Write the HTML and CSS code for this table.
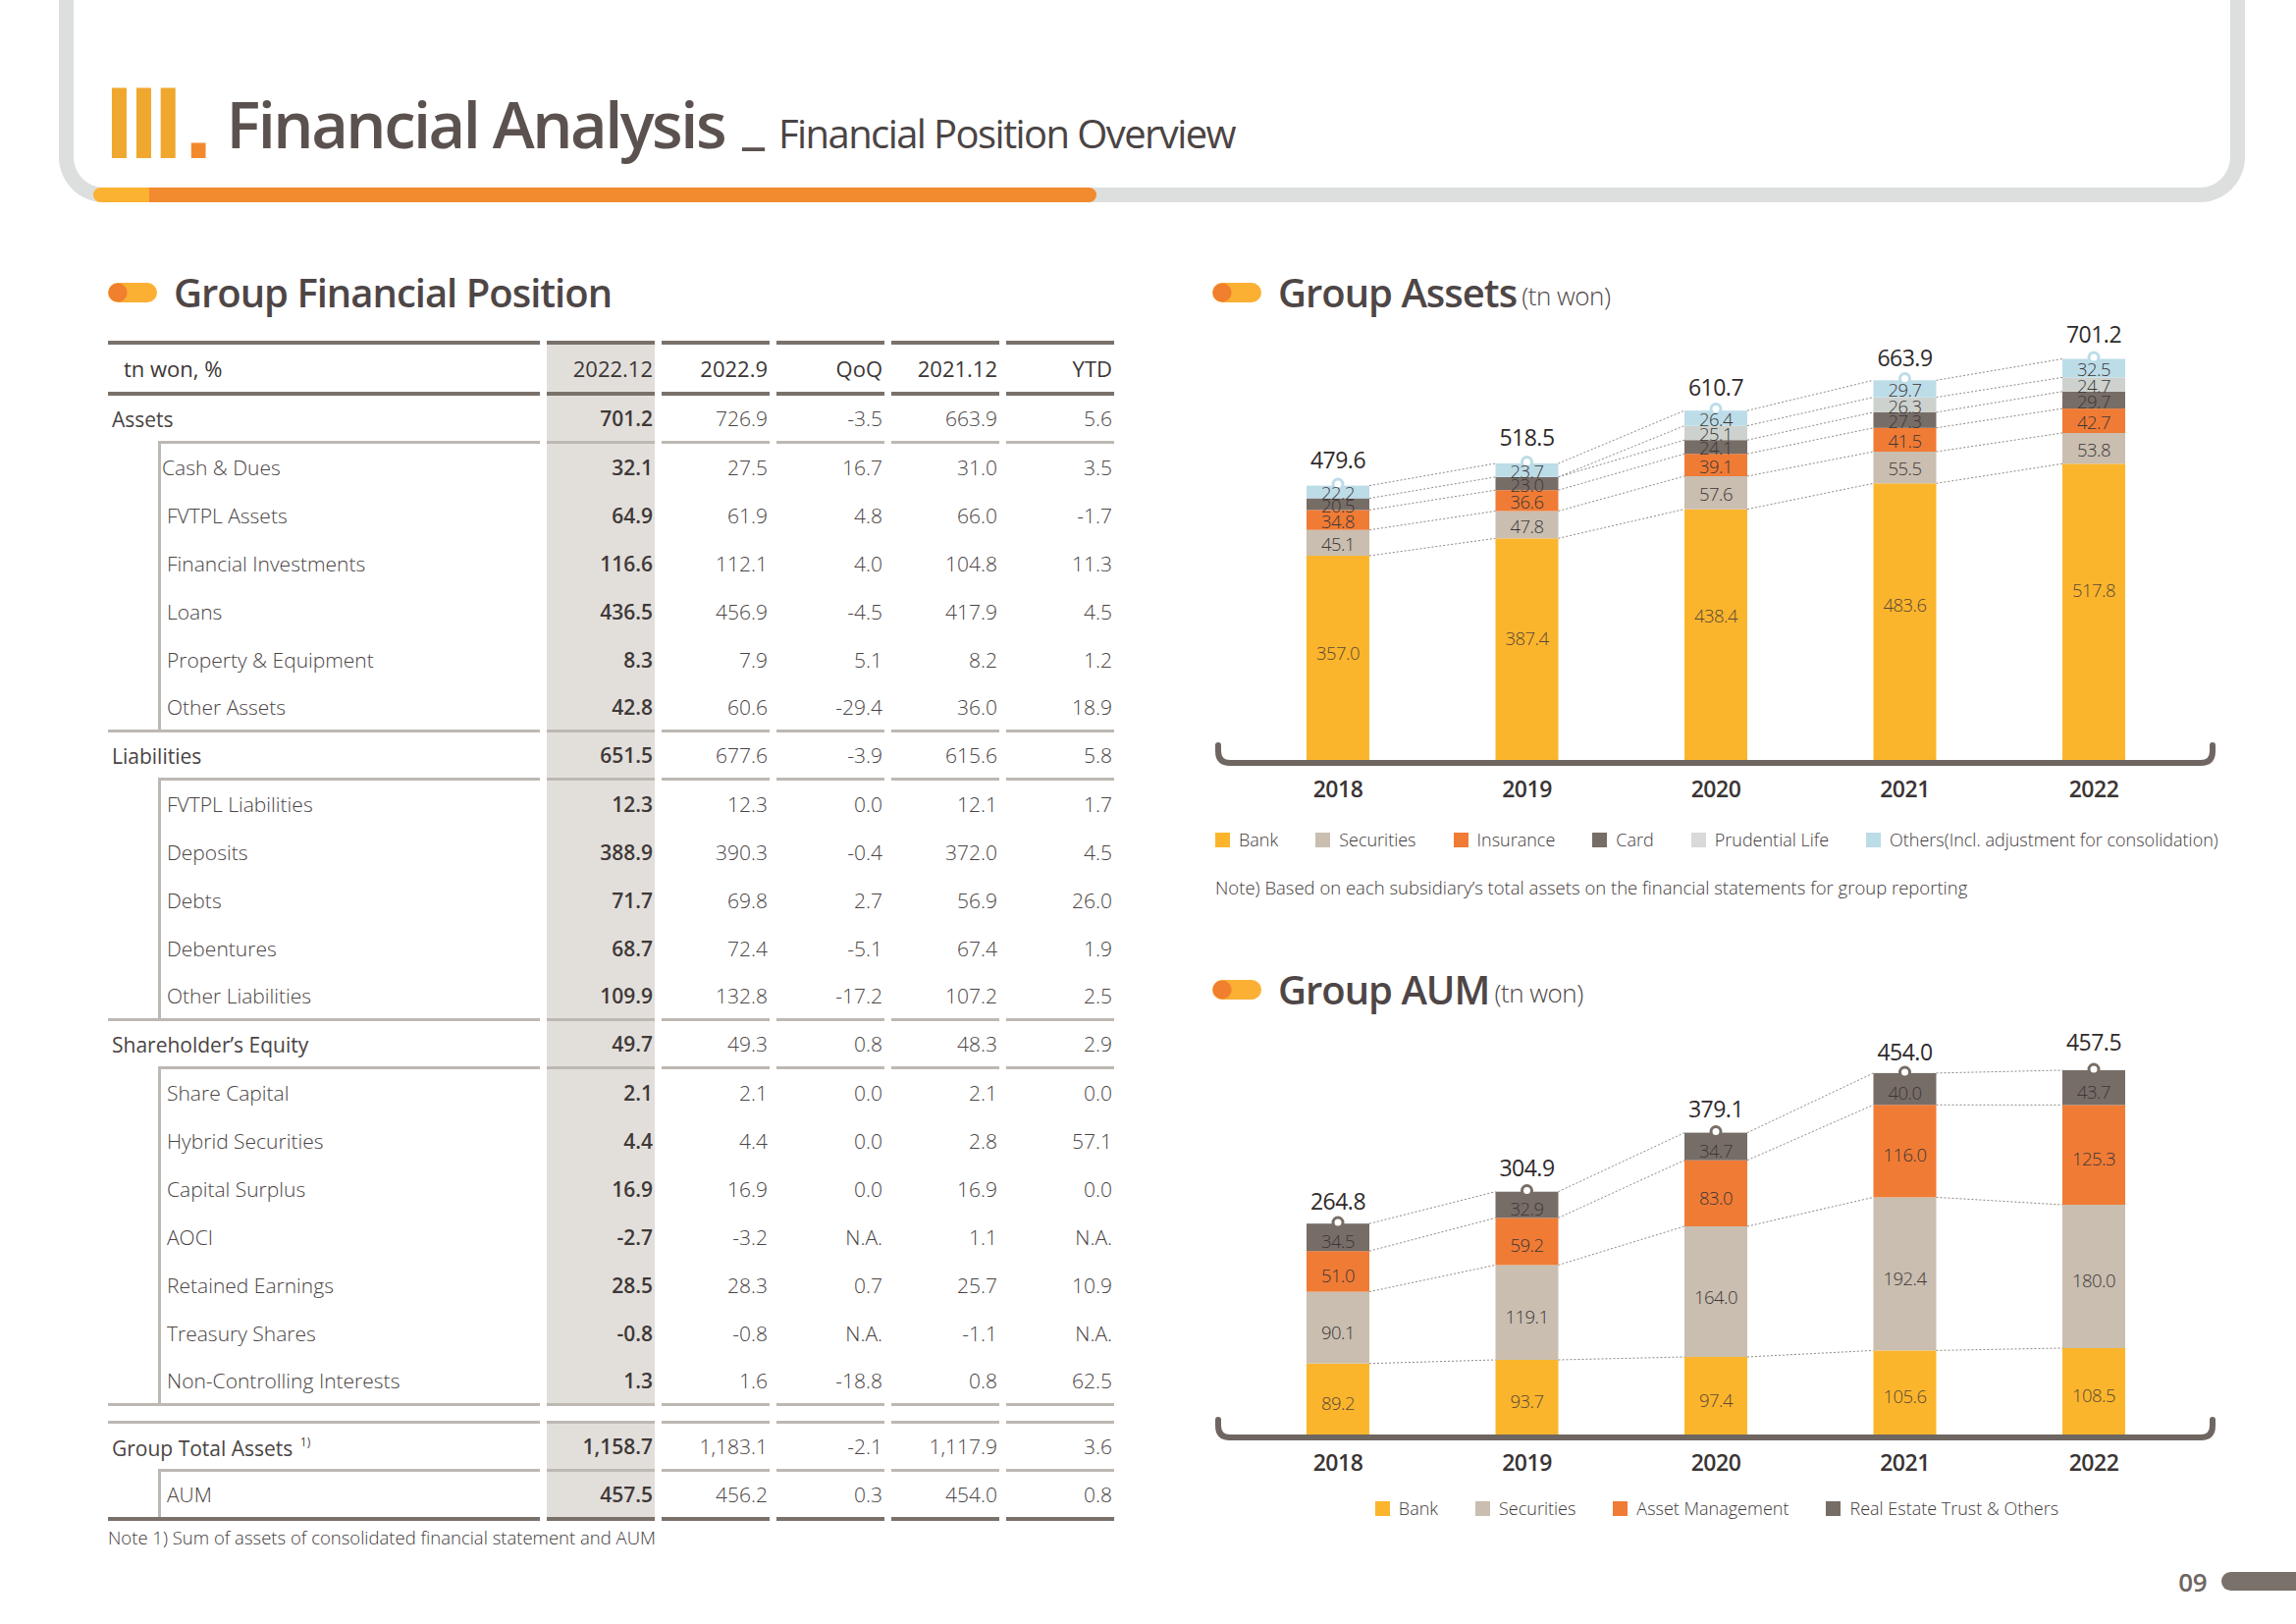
FILE: index.html
```html
<!DOCTYPE html>
<html lang="en">
<head>
<meta charset="utf-8">
<title>Financial Analysis - Financial Position Overview</title>
<link rel="stylesheet" href="styles.css">
</head>
<body>
<header class="top">
  <div class="frame">
    <h1 class="title"><span class="roman">III<span class="rdot">.</span></span><span class="main-t">Financial Analysis</span><span class="uscore">_</span><span class="sub-t">Financial Position Overview</span></h1>
    <div class="progress"></div>
  </div>
</header>

<main class="main">
  <section class="col left">
    <h2 class="sec-h"><span class="pill"></span>Group Financial Position</h2>
    <table class="fin">
      <colgroup><col class="c-lab"><col class="c-num"><col class="c-num"><col class="c-num"><col class="c-num"><col class="c-num"></colgroup>
      <tr class="head"><td class="lab">tn won, %</td><td class="cur">2022.12</td><td>2022.9</td><td>QoQ</td><td>2021.12</td><td>YTD</td></tr>
      <tr class="grp"><td class="lab">Assets</td><td class="cur">701.2</td><td>726.9</td><td>-3.5</td><td>663.9</td><td>5.6</td></tr>
      <tr class="sub"><td class="lab cash">Cash &amp; Dues</td><td class="cur">32.1</td><td>27.5</td><td>16.7</td><td>31.0</td><td>3.5</td></tr>
      <tr class="sub"><td class="lab">FVTPL Assets</td><td class="cur">64.9</td><td>61.9</td><td>4.8</td><td>66.0</td><td>-1.7</td></tr>
      <tr class="sub"><td class="lab">Financial Investments</td><td class="cur">116.6</td><td>112.1</td><td>4.0</td><td>104.8</td><td>11.3</td></tr>
      <tr class="sub"><td class="lab">Loans</td><td class="cur">436.5</td><td>456.9</td><td>-4.5</td><td>417.9</td><td>4.5</td></tr>
      <tr class="sub"><td class="lab">Property &amp; Equipment</td><td class="cur">8.3</td><td>7.9</td><td>5.1</td><td>8.2</td><td>1.2</td></tr>
      <tr class="sub last"><td class="lab">Other Assets</td><td class="cur">42.8</td><td>60.6</td><td>-29.4</td><td>36.0</td><td>18.9</td></tr>
      <tr class="grp"><td class="lab">Liabilities</td><td class="cur">651.5</td><td>677.6</td><td>-3.9</td><td>615.6</td><td>5.8</td></tr>
      <tr class="sub"><td class="lab">FVTPL Liabilities</td><td class="cur">12.3</td><td>12.3</td><td>0.0</td><td>12.1</td><td>1.7</td></tr>
      <tr class="sub"><td class="lab">Deposits</td><td class="cur">388.9</td><td>390.3</td><td>-0.4</td><td>372.0</td><td>4.5</td></tr>
      <tr class="sub"><td class="lab">Debts</td><td class="cur">71.7</td><td>69.8</td><td>2.7</td><td>56.9</td><td>26.0</td></tr>
      <tr class="sub"><td class="lab">Debentures</td><td class="cur">68.7</td><td>72.4</td><td>-5.1</td><td>67.4</td><td>1.9</td></tr>
      <tr class="sub last"><td class="lab">Other Liabilities</td><td class="cur">109.9</td><td>132.8</td><td>-17.2</td><td>107.2</td><td>2.5</td></tr>
      <tr class="grp"><td class="lab">Shareholder’s Equity</td><td class="cur">49.7</td><td>49.3</td><td>0.8</td><td>48.3</td><td>2.9</td></tr>
      <tr class="sub"><td class="lab">Share Capital</td><td class="cur">2.1</td><td>2.1</td><td>0.0</td><td>2.1</td><td>0.0</td></tr>
      <tr class="sub"><td class="lab">Hybrid Securities</td><td class="cur">4.4</td><td>4.4</td><td>0.0</td><td>2.8</td><td>57.1</td></tr>
      <tr class="sub"><td class="lab">Capital Surplus</td><td class="cur">16.9</td><td>16.9</td><td>0.0</td><td>16.9</td><td>0.0</td></tr>
      <tr class="sub"><td class="lab">AOCI</td><td class="cur">-2.7</td><td>-3.2</td><td>N.A.</td><td>1.1</td><td>N.A.</td></tr>
      <tr class="sub"><td class="lab">Retained Earnings</td><td class="cur">28.5</td><td>28.3</td><td>0.7</td><td>25.7</td><td>10.9</td></tr>
      <tr class="sub"><td class="lab">Treasury Shares</td><td class="cur">-0.8</td><td>-0.8</td><td>N.A.</td><td>-1.1</td><td>N.A.</td></tr>
      <tr class="sub last"><td class="lab">Non-Controlling Interests</td><td class="cur">1.3</td><td>1.6</td><td>-18.8</td><td>0.8</td><td>62.5</td></tr>
      <tr class="gap"><td></td><td></td><td></td><td></td><td></td><td></td></tr>
      <tr class="grp total"><td class="lab">Group Total Assets <sup>1)</sup></td><td class="cur">1,158.7</td><td>1,183.1</td><td>-2.1</td><td>1,117.9</td><td>3.6</td></tr>
      <tr class="sub end"><td class="lab">AUM</td><td class="cur">457.5</td><td>456.2</td><td>0.3</td><td>454.0</td><td>0.8</td></tr>
    </table>
    <p class="note">Note 1) Sum of assets of consolidated financial statement and AUM</p>
  </section>

  <section class="col right">
    <h2 class="sec-h"><span class="pill"></span>Group Assets<span class="unit">(tn won)</span></h2>
    <svg class="chart" width="1025" height="495" viewBox="0 0 1025 495">
      <g class="links">
        <line x1="160" y1="241" x2="288.5" y2="223.3"/><line x1="160" y1="214.7" x2="288.5" y2="195.5"/><line x1="160" y1="194.4" x2="288.5" y2="174.2"/><line x1="160" y1="182.5" x2="288.5" y2="160.8"/><line x1="160" y1="169.6" x2="288.5" y2="147"/>
        <line x1="352.5" y1="223.3" x2="481" y2="193.6"/><line x1="352.5" y1="195.5" x2="481" y2="160"/><line x1="352.5" y1="174.2" x2="481" y2="137.2"/><line x1="352.5" y1="160.8" x2="481" y2="123.2"/><line x1="352.5" y1="160.8" x2="481" y2="108.6"/><line x1="352.5" y1="147" x2="481" y2="93.2"/>
        <line x1="545" y1="193.6" x2="673.5" y2="167.3"/><line x1="545" y1="160" x2="673.5" y2="135"/><line x1="545" y1="137.2" x2="673.5" y2="110.8"/><line x1="545" y1="123.2" x2="673.5" y2="94.9"/><line x1="545" y1="108.6" x2="673.5" y2="79.6"/><line x1="545" y1="93.2" x2="673.5" y2="62.3"/>
        <line x1="737.5" y1="167.3" x2="866" y2="147.3"/><line x1="737.5" y1="135" x2="866" y2="116"/><line x1="737.5" y1="110.8" x2="866" y2="91.1"/><line x1="737.5" y1="94.9" x2="866" y2="73.8"/><line x1="737.5" y1="79.6" x2="866" y2="59.4"/><line x1="737.5" y1="62.3" x2="866" y2="40.5"/>
      </g>
      <g class="bars">
        <rect class="c-bank" x="96" y="241" width="64" height="208"/><rect class="c-sec" x="96" y="214.7" width="64" height="26.3"/><rect class="c-ins" x="96" y="194.4" width="64" height="20.3"/><rect class="c-card" x="96" y="182.5" width="64" height="11.9"/><rect class="c-oth" x="96" y="169.6" width="64" height="12.9"/>
        <rect class="c-bank" x="288.5" y="223.3" width="64" height="225.7"/><rect class="c-sec" x="288.5" y="195.5" width="64" height="27.8"/><rect class="c-ins" x="288.5" y="174.2" width="64" height="21.3"/><rect class="c-card" x="288.5" y="160.8" width="64" height="13.4"/><rect class="c-oth" x="288.5" y="147" width="64" height="13.8"/>
        <rect class="c-bank" x="481" y="193.6" width="64" height="255.4"/><rect class="c-sec" x="481" y="160" width="64" height="33.6"/><rect class="c-ins" x="481" y="137.2" width="64" height="22.8"/><rect class="c-card" x="481" y="123.2" width="64" height="14"/><rect class="c-pru" x="481" y="108.6" width="64" height="14.6"/><rect class="c-oth" x="481" y="93.2" width="64" height="15.4"/>
        <rect class="c-bank" x="673.5" y="167.3" width="64" height="281.7"/><rect class="c-sec" x="673.5" y="135" width="64" height="32.3"/><rect class="c-ins" x="673.5" y="110.8" width="64" height="24.2"/><rect class="c-card" x="673.5" y="94.9" width="64" height="15.9"/><rect class="c-pru" x="673.5" y="79.6" width="64" height="15.3"/><rect class="c-oth" x="673.5" y="62.3" width="64" height="17.3"/>
        <rect class="c-bank" x="866" y="147.3" width="64" height="301.7"/><rect class="c-sec" x="866" y="116" width="64" height="31.3"/><rect class="c-ins" x="866" y="91.1" width="64" height="24.9"/><rect class="c-card" x="866" y="73.8" width="64" height="17.3"/><rect class="c-pru" x="866" y="59.4" width="64" height="14.4"/><rect class="c-oth" x="866" y="40.5" width="64" height="18.9"/>
      </g>
      <g class="pins pin-blue">
        <circle cx="128" cy="168" r="5"/><circle cx="320.5" cy="145.5" r="5"/><circle cx="513" cy="91.5" r="5"/><circle cx="705.5" cy="60.5" r="5"/><circle cx="898" cy="39" r="5"/>
      </g>
      <path class="axis" d="M6 434 V440 Q6 452 18 452 H1007 Q1019 452 1019 440 V434"/>
      <g class="seg">
        <text class="bank-t" x="128" y="339">357.0</text><text x="128" y="228">45.1</text><text x="128" y="205">34.8</text><text x="128" y="189">20.5</text><text x="128" y="176">22.2</text>
        <text class="bank-t" x="320.5" y="324">387.4</text><text x="320.5" y="210">47.8</text><text x="320.5" y="185">36.6</text><text x="320.5" y="168">23.0</text><text x="320.5" y="154">23.7</text>
        <text class="bank-t" x="513" y="301">438.4</text><text x="513" y="177">57.6</text><text x="513" y="149">39.1</text><text x="513" y="130">24.1</text><text x="513" y="116">25.1</text><text x="513" y="101">26.4</text>
        <text class="bank-t" x="705.5" y="290">483.6</text><text x="705.5" y="151">55.5</text><text x="705.5" y="123">41.5</text><text x="705.5" y="103">27.3</text><text x="705.5" y="88">26.3</text><text x="705.5" y="71">29.7</text>
        <text class="bank-t" x="898" y="275">517.8</text><text x="898" y="132">53.8</text><text x="898" y="104">42.7</text><text x="898" y="83">29.7</text><text x="898" y="67">24.7</text><text x="898" y="50">32.5</text>
      </g>
      <g class="tot">
        <text x="128" y="143">479.6</text><text x="320.5" y="120">518.5</text><text x="513" y="69">610.7</text><text x="705.5" y="39">663.9</text><text x="898" y="15">701.2</text>
      </g>
      <g class="yr">
        <text x="128" y="478">2018</text><text x="320.5" y="478">2019</text><text x="513" y="478">2020</text><text x="705.5" y="478">2021</text><text x="898" y="478">2022</text>
      </g>
    </svg>
    <ul class="legend wide">
      <li><span class="sw c-bank-bg"></span>Bank</li>
      <li><span class="sw c-sec-bg"></span>Securities</li>
      <li><span class="sw c-ins-bg"></span>Insurance</li>
      <li><span class="sw c-card-bg"></span>Card</li>
      <li><span class="sw c-prul-bg"></span>Prudential Life</li>
      <li><span class="sw c-oth-bg"></span>Others(Incl. adjustment for consolidation)</li>
    </ul>
    <p class="note chart-note">Note) Based on each subsidiary’s total assets on the financial statements for group reporting</p>

    <h2 class="sec-h aum-h"><span class="pill"></span>Group AUM<span class="unit">(tn won)</span></h2>
    <svg class="chart" width="1025" height="470" viewBox="0 0 1025 470">
      <g class="links">
        <line x1="160" y1="353.7" x2="288.5" y2="350"/><line x1="160" y1="280.6" x2="288.5" y2="253.4"/><line x1="160" y1="239.2" x2="288.5" y2="205.4"/><line x1="160" y1="211.2" x2="288.5" y2="178.7"/>
        <line x1="352.5" y1="350" x2="481" y2="347"/><line x1="352.5" y1="253.4" x2="481" y2="214"/><line x1="352.5" y1="205.4" x2="481" y2="146.7"/><line x1="352.5" y1="178.7" x2="481" y2="118.6"/>
        <line x1="545" y1="347" x2="673.5" y2="340.4"/><line x1="545" y1="214" x2="673.5" y2="184.4"/><line x1="545" y1="146.7" x2="673.5" y2="90.3"/><line x1="545" y1="118.6" x2="673.5" y2="57.9"/>
        <line x1="737.5" y1="340.4" x2="866" y2="338"/><line x1="737.5" y1="184.4" x2="866" y2="192"/><line x1="737.5" y1="90.3" x2="866" y2="90.4"/><line x1="737.5" y1="57.9" x2="866" y2="55"/>
      </g>
      <g class="bars">
        <rect class="c-bank" x="96" y="353.7" width="64" height="72.3"/><rect class="c-sec" x="96" y="280.6" width="64" height="73.1"/><rect class="c-ins" x="96" y="239.2" width="64" height="41.4"/><rect class="c-card" x="96" y="211.2" width="64" height="28"/>
        <rect class="c-bank" x="288.5" y="350" width="64" height="76"/><rect class="c-sec" x="288.5" y="253.4" width="64" height="96.6"/><rect class="c-ins" x="288.5" y="205.4" width="64" height="48"/><rect class="c-card" x="288.5" y="178.7" width="64" height="26.7"/>
        <rect class="c-bank" x="481" y="347" width="64" height="79"/><rect class="c-sec" x="481" y="214" width="64" height="133"/><rect class="c-ins" x="481" y="146.7" width="64" height="67.3"/><rect class="c-card" x="481" y="118.6" width="64" height="28.1"/>
        <rect class="c-bank" x="673.5" y="340.4" width="64" height="85.6"/><rect class="c-sec" x="673.5" y="184.4" width="64" height="156"/><rect class="c-ins" x="673.5" y="90.3" width="64" height="94.1"/><rect class="c-card" x="673.5" y="57.9" width="64" height="32.4"/>
        <rect class="c-bank" x="866" y="338" width="64" height="88"/><rect class="c-sec" x="866" y="192" width="64" height="146"/><rect class="c-ins" x="866" y="90.4" width="64" height="101.6"/><rect class="c-card" x="866" y="55" width="64" height="35.4"/>
      </g>
      <g class="pins pin-dark">
        <circle cx="128" cy="210" r="5"/><circle cx="320.5" cy="177.5" r="5"/><circle cx="513" cy="117.5" r="5"/><circle cx="705.5" cy="57" r="5"/><circle cx="898" cy="54" r="5"/>
      </g>
      <path class="axis" d="M6 411 V417 Q6 429 18 429 H1007 Q1019 429 1019 417 V411"/>
      <g class="seg">
        <text class="bank-t" x="128" y="393">89.2</text><text x="128" y="321">90.1</text><text x="128" y="263">51.0</text><text x="128" y="228">34.5</text>
        <text class="bank-t" x="320.5" y="391">93.7</text><text x="320.5" y="305">119.1</text><text x="320.5" y="232">59.2</text><text x="320.5" y="195">32.9</text>
        <text class="bank-t" x="513" y="390">97.4</text><text x="513" y="285">164.0</text><text x="513" y="184">83.0</text><text x="513" y="136">34.7</text>
        <text class="bank-t" x="705.5" y="386">105.6</text><text x="705.5" y="266">192.4</text><text x="705.5" y="140">116.0</text><text x="705.5" y="77">40.0</text>
        <text class="bank-t" x="898" y="385">108.5</text><text x="898" y="268">180.0</text><text x="898" y="144">125.3</text><text x="898" y="76">43.7</text>
      </g>
      <g class="tot">
        <text x="128" y="188">264.8</text><text x="320.5" y="154">304.9</text><text x="513" y="94">379.1</text><text x="705.5" y="36">454.0</text><text x="898" y="26">457.5</text>
      </g>
      <g class="yr">
        <text x="128" y="454">2018</text><text x="320.5" y="454">2019</text><text x="513" y="454">2020</text><text x="705.5" y="454">2021</text><text x="898" y="454">2022</text>
      </g>
    </svg>
    <ul class="legend center">
      <li><span class="sw c-bank-bg"></span>Bank</li>
      <li><span class="sw c-sec-bg"></span>Securities</li>
      <li><span class="sw c-ins-bg"></span>Asset Management</li>
      <li><span class="sw c-card-bg"></span>Real Estate Trust &amp; Others</li>
    </ul>
  </section>
</main>

<footer class="foot"><span class="pno">09</span><span class="ptab"></span></footer>
</body>
</html>
```

FILE: styles.css
```css
:root {
  --rule: #bdb8b2;
  --dark-rule: #7a716b;
  --txt: #4a4444;
  --shade: #e2dfdb;
  --bank: #fbb52c;
  --sec: #c9beb0;
  --ins: #f07b35;
  --card: #776d67;
  --pru: #cdd2ce;
  --prul: #d9d9d9;
  --oth: #bcdce8;
}

html, body { margin: 0; padding: 0; }
body {
  width: 2339px;
  height: 1654px;
  overflow: hidden;
  background: #fff;
  font-family: "Open Sans", "Liberation Sans", sans-serif;
  color: var(--txt);
  display: flex;
  flex-direction: column;
}

/* ---------- header ---------- */
.top { height: 206px; padding: 0 52px 0 60px; flex: none; }
.frame {
  position: relative;
  height: 206px;
  box-sizing: border-box;
  border: 15px solid #dcdfde;
  border-top: 0;
  border-radius: 0 0 46px 46px;
  padding: 93px 0 0 32px;
}
.title {
  margin: 0;
  font-size: 65px;
  line-height: 66px;
  font-weight: 600;
  white-space: nowrap;
  color: #5b5250;
}
.roman {
  font-family: "Liberation Sans", Arial, sans-serif;
  font-weight: 700;
  font-size: 104px;
  line-height: 0;
  letter-spacing: -4px;
  color: #efa72e;
  vertical-align: -10px;
}
.rdot { color: #f28a2c; margin-left: 6px; }
.main-t { margin-left: 18px; letter-spacing: -2.5px; }
.uscore {
  font-size: 56px;
  font-weight: 700;
  line-height: 0;
  margin-left: 18px;
  vertical-align: 6px;
  color: #5b5250;
}
.sub-t {
  font-size: 40px;
  font-weight: 400;
  letter-spacing: -1.6px;
  margin-left: 14px;
  color: #4b4444;
}
.progress {
  position: absolute;
  left: 20px;
  bottom: -15px;
  width: 1022px;
  height: 15px;
  border-radius: 8px;
  background: linear-gradient(to right, #fbb231 0 57px, #f28a30 57px);
}

/* ---------- main ---------- */
.main {
  flex: 1;
  display: flex;
  gap: 100px;
  padding: 64px 0 0 110px;
}
.col { width: 1025px; flex: none; }

.sec-h {
  display: flex;
  align-items: center;
  height: 55px;
  margin: 0;
  font-size: 40px;
  font-weight: 600;
  letter-spacing: -1px;
  color: #4e4646;
  white-space: nowrap;
}
.pill {
  width: 50px;
  height: 20px;
  border-radius: 10px;
  margin-right: 17px;
  flex: none;
  background:
    radial-gradient(circle at 10px 10px, #f07f2e 0 9px, transparent 10px),
    linear-gradient(to right, #fbb034, #fbb034);
}
.unit {
  font-size: 26px;
  font-weight: 300;
  letter-spacing: -0.5px;
  margin-left: 5px;
  align-self: flex-end;
  margin-bottom: 6px;
}

/* ---------- table ---------- */
.fin {
  table-layout: fixed;
  width: 1039px;
  border-collapse: separate;
  border-spacing: 7px 0;
  margin: 22px -7px 0;
  font-size: 21px;
  line-height: 1;
  color: var(--txt);
}
.fin col.c-lab { width: 440px; }
.fin col.c-num { width: 110px; }
.fin td {
  padding: 0 2px 0 0;
  text-align: right;
  vertical-align: middle;
  font-weight: 300;
  white-space: nowrap;
}
.fin td.lab { text-align: left; padding-left: 4px; }
.fin td.cur { background-color: var(--shade); font-weight: 600; color: #3f3838; }
.fin tr { height: 49px; }

.fin tr.head { height: 56px; }
.fin tr.head td {
  border-top: 4px solid var(--dark-rule);
  border-bottom: 4px solid var(--dark-rule);
  font-weight: 400;
  font-size: 22px;
  color: #3c3636;
}
.fin tr.head td.cur { font-weight: 400; }
.fin tr.head td.lab { padding-left: 16px; }

.fin tr.grp td { border-bottom: 3px solid var(--rule); }
.fin tr.grp td.lab {
  border-bottom: 0;
  font-weight: 400;
  background: linear-gradient(var(--rule), var(--rule)) no-repeat 51px 100% / calc(100% - 51px) 3px;
}
.fin tr.sub td.lab {
  padding-left: 60px;
  background: linear-gradient(var(--rule), var(--rule)) no-repeat 51px 0 / 3px 100%;
}
.fin tr.sub td.cash { padding-left: 55px; }
.fin tr.last td { border-bottom: 3px solid var(--rule); }

.fin tr.gap { height: 15px; }
.fin tr.gap td { padding: 0; }

.fin tr.total { height: 52px; }
.fin tr.total td { border-top: 3px solid var(--rule); }
.fin tr.total td.lab { border-top: 3px solid var(--rule); }
.fin sup { font-size: 12px; vertical-align: 10px; margin-left: 2px; }

.fin tr.end { height: 50px; }
.fin tr.end td { border-bottom: 4px solid var(--dark-rule); }

.note {
  margin: 5px 0 0;
  font-size: 18.5px;
  line-height: 24px;
  font-weight: 300;
  color: #3f3a3a;
}

/* ---------- charts ---------- */
.chart { display: block; overflow: visible; font-family: "Open Sans", "Liberation Sans", sans-serif; }
.c-bank { fill: var(--bank); }
.c-sec { fill: var(--sec); }
.c-ins { fill: var(--ins); }
.c-card { fill: var(--card); }
.c-pru { fill: var(--pru); }
.c-oth { fill: var(--oth); }
.links line { stroke: #8f8985; stroke-width: 1; stroke-dasharray: 2 2; }
.pins circle { fill: #fff; stroke-width: 3; }
.pin-blue circle { stroke: var(--oth); }
.pin-dark circle { stroke: var(--card); }
.axis { fill: none; stroke: #6f6661; stroke-width: 6; stroke-linecap: round; }
.seg text {
  font-size: 18.5px;
  font-weight: 300;
  letter-spacing: -0.5px;
  fill: #3d3737;
  text-anchor: middle;
  dominant-baseline: central;
}
.seg text.bank-t { fill: #5a4838; }
.tot text {
  font-size: 23px;
  font-weight: 400;
  letter-spacing: -0.5px;
  fill: #2f2a2a;
  text-anchor: middle;
  dominant-baseline: central;
}
.yr text {
  font-size: 23px;
  font-weight: 600;
  letter-spacing: -0.5px;
  fill: #3a3434;
  text-anchor: middle;
  dominant-baseline: central;
}

.legend {
  list-style: none;
  margin: 23px 0 0;
  padding: 0 0 0 3px;
  display: flex;
  gap: 38px;
  height: 24px;
  align-items: center;
  font-size: 18px;
  font-weight: 300;
  color: #3f3a3a;
  white-space: nowrap;
}
.legend li { display: flex; align-items: center; gap: 9px; }
.legend.center { justify-content: center; margin-top: 19px; }
.sw { width: 15px; height: 15px; display: block; flex: none; }
.c-bank-bg { background: var(--bank); }
.c-sec-bg { background: var(--sec); }
.c-ins-bg { background: var(--ins); }
.c-card-bg { background: var(--card); }
.c-prul-bg { background: var(--prul); }
.c-oth-bg { background: var(--oth); }

.chart-note { margin: 25px 0 0 3px; }
.aum-h { margin-top: 64px; }

/* ---------- footer ---------- */
.foot {
  flex: none;
  display: flex;
  justify-content: flex-end;
  align-items: center;
  gap: 15px;
  padding-bottom: 34px;
  height: 19px;
}
.pno { font-size: 26px; font-weight: 600; color: #6e6661; letter-spacing: -0.5px; }
.ptab { width: 76px; height: 19px; background: #7a716b; border-radius: 10px 0 0 10px; }
```
